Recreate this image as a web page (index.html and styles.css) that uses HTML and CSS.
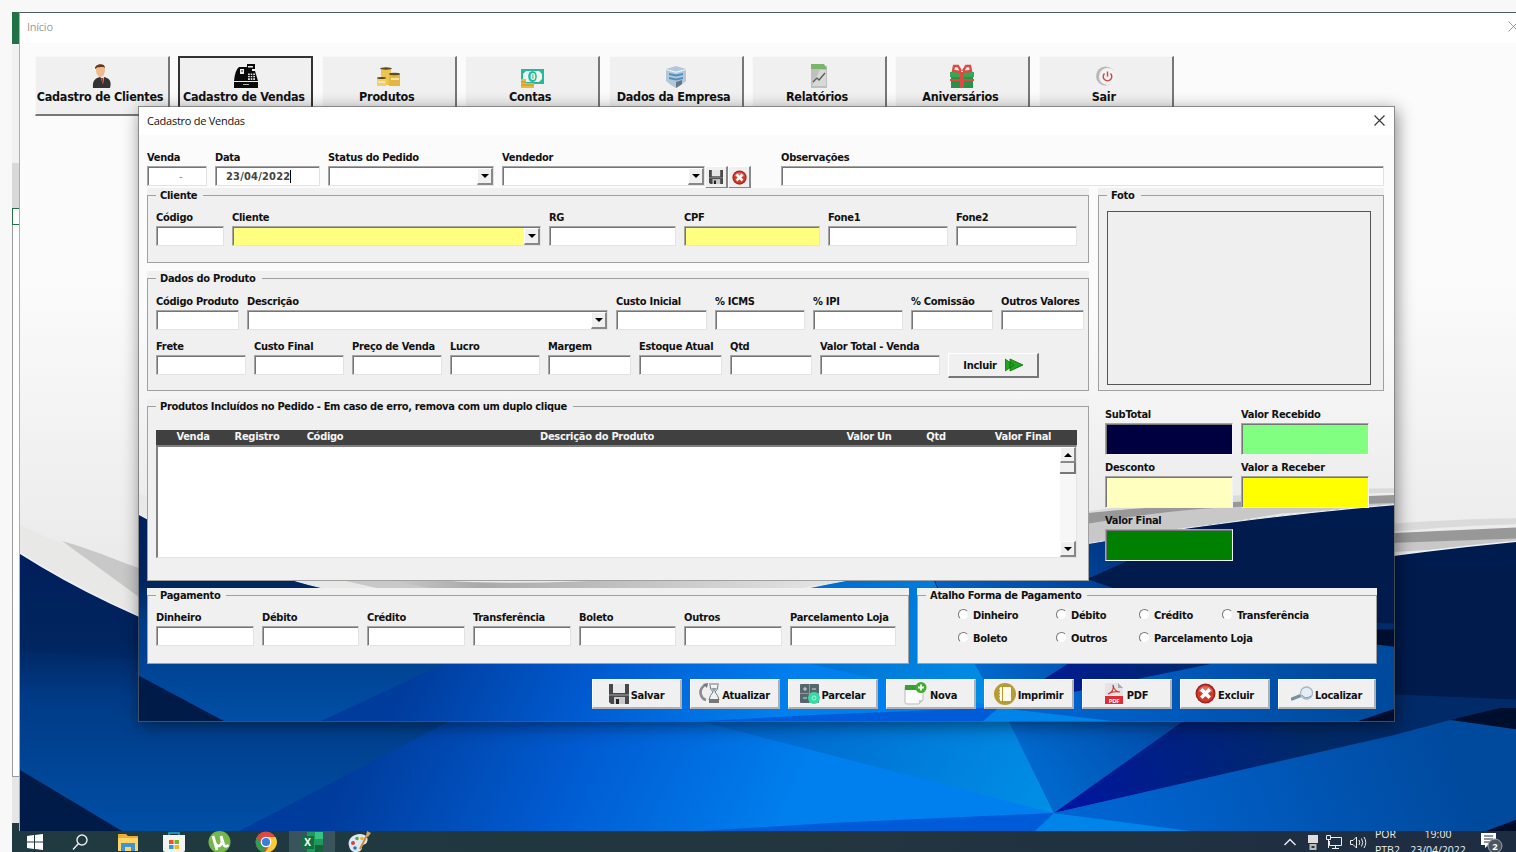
FILE: index.html
```html
<!DOCTYPE html>
<html lang="pt-BR">
<head>
  <meta charset="UTF-8">
  <title>Cadastro de Vendas</title>
  <link rel="stylesheet" href="styles.css">
</head>

<body>

  <!-- shared drawings -->
  <svg class="defs" width="0" height="0">
    <defs>
      <linearGradient id="paper" x1="0" y1="0" x2="0" y2="1">
        <stop offset="0" stop-color="#fbfbfb"/>
        <stop offset=".3" stop-color="#fbfbfb"/>
        <stop offset=".65" stop-color="#ebebeb"/>
        <stop offset="1" stop-color="#e6e6e6"/>
      </linearGradient>
      <linearGradient id="navy" gradientUnits="userSpaceOnUse" x1="0" y1="560" x2="0" y2="831">
        <stop offset="0" stop-color="#001f5c"/>
        <stop offset=".3" stop-color="#00255f"/>
        <stop offset=".5" stop-color="#003a85"/>
        <stop offset="1" stop-color="#004fa6"/>
      </linearGradient>
      <linearGradient id="mid" gradientUnits="userSpaceOnUse" x1="380" y1="700" x2="760" y2="880">
        <stop offset="0" stop-color="#003c9c"/>
        <stop offset=".5" stop-color="#005cd2"/>
        <stop offset="1" stop-color="#0080ee"/>
      </linearGradient>
      <linearGradient id="sky" gradientUnits="userSpaceOnUse" x1="760" y1="640" x2="1050" y2="813">
        <stop offset="0" stop-color="#0063cc"/>
        <stop offset="1" stop-color="#0090e6"/>
      </linearGradient>
      <linearGradient id="side" gradientUnits="userSpaceOnUse" x1="1060" y1="800" x2="1330" y2="600">
        <stop offset="0" stop-color="#0068cc"/>
        <stop offset=".45" stop-color="#0048a4"/>
        <stop offset="1" stop-color="#001b4e"/>
      </linearGradient>
      <linearGradient id="wedge" gradientUnits="userSpaceOnUse" x1="1054" y1="813" x2="1290" y2="700">
        <stop offset="0" stop-color="#0014a4"/>
        <stop offset=".35" stop-color="#001d8c"/>
        <stop offset="1" stop-color="#002a68"/>
      </linearGradient>
      <linearGradient id="low" gradientUnits="userSpaceOnUse" x1="1120" y1="831" x2="1440" y2="720">
        <stop offset="0" stop-color="#0064d0"/>
        <stop offset="1" stop-color="#004a9e"/>
      </linearGradient>
      <linearGradient id="ribbon" gradientUnits="userSpaceOnUse" x1="250" y1="0" x2="850" y2="0">
        <stop offset="0" stop-color="#dedede"/>
        <stop offset=".3" stop-color="#a9a9a9"/>
        <stop offset="1" stop-color="#e4e4e4"/>
      </linearGradient>
      <clipPath id="sea">
        <path d="M20 553C75 588 145 622 210 643C340 686 620 700 824 652C930 628 1040 610 1163 592C1260 573 1400 552 1529 540V831H20Z"/>
      </clipPath>
      <symbol id="wallpaper" viewBox="20 43 1509 788" preserveAspectRatio="none">
        <rect x="20" y="43" width="1509" height="788" fill="url(#paper)"/>
        <path d="M20 525C60 545 110 560 139 577C240 628 340 640 480 648L840 640L1163 570L1529 530V560L824 665H250L139 620L20 556Z" fill="#e8e8e6"/>
        <path d="M62 541C100 552 120 562 139 568C220 607 290 635 400 640V668C260 650 200 620 139 597Z" fill="#c8c8c8"/>
        <path d="M300 634C480 660 690 635 890 614V640C700 680 430 680 300 634Z" fill="url(#ribbon)"/>
        <path d="M1000 585C1080 560 1160 548 1240 538C1340 527 1420 519 1529 518V524C1440 526 1330 535 1240 552C1180 562 1090 573 1000 598Z" fill="#dadada"/>
        <path d="M1000 582C1080 560 1160 546 1394 533L1529 527V540L1394 550C1300 548 1200 560 1150 568L1000 596Z" fill="#989898"/>
        <path d="M1150 568C1240 550 1320 540 1390 543L1529 538V544L1394 552L1290 571L1163 592L1000 618V592Z" fill="#c8c8c8"/>
        <g clip-path="url(#sea)">
          <rect x="20" y="530" width="1509" height="301" fill="url(#navy)"/>
          <path d="M20 650L139 660L330 700L600 640H20Z" fill="#00255f" opacity=".5"/>
          <path d="M20 770L122 831H20Z" fill="#001b47"/>
          <path d="M239 831L448 722L610 640L823 600L1054 813L1035 831Z" fill="url(#mid)"/>
          <path d="M600 690L703 722L1054 813L990 680L960 600H760Z" fill="url(#sky)"/>
          <path d="M1054 813L1010 724L960 600L1200 520H1529V760Z" fill="url(#side)"/>
          <path d="M1160 640L1300 570H1529V722H1450L1240 722L1290 690Z" fill="#001b4c"/>
          <path d="M1054 813L1182 722L1290 690L1529 700V730L1450 720L1394 735Z" fill="url(#wedge)"/>
          <path d="M1450 720L1500 708H1529V732Z" fill="#000e2e"/>
          <path d="M1054 813L1394 735L1450 720L1529 731V831H1180Z" fill="url(#low)"/>
          <path d="M1054 813L830 823L700 831H1035Z" fill="#005bd8"/>
          <path d="M1054 813L1035 831H1190Z" fill="#0084ea"/>
          <path d="M1486 831L1529 815V831Z" fill="#000e2c"/>
        </g>
        <path d="M20 553C75 588 145 622 210 643C340 686 620 700 824 652C930 628 1040 610 1163 592C1260 573 1400 552 1529 540" fill="none" stroke="#eef1f8" stroke-width="1.5"/>
      </symbol>

      <symbol id="i-save" viewBox="0 0 20 20">
        <path d="M0 0H20V20H2L0 18Z" fill="#48484b"/>
        <path d="M4 0H16V9H4Z" fill="#e8e8e8"/>
        <path d="M0 10H20V12H0Z" fill="#77777a"/>
        <path d="M5 13H16V20H5Z" fill="#c9c9cb"/>
        <path d="M7 15H10V20H7Z" fill="#222"/>
      </symbol>
      <symbol id="i-delete" viewBox="0 0 20 20">
        <circle cx="10" cy="10" r="9.5" fill="#a32020"/>
        <circle cx="10" cy="10" r="8" fill="#d23a26"/>
        <path d="M3 8A7.5 7.5 0 0 1 17 8Q10 11 3 8Z" fill="#e98a7d" opacity=".6"/>
        <path d="M6 6L14 14M14 6L6 14" stroke="#fff" stroke-width="3.4"/>
      </symbol>
    </defs>
  </svg>

  <div class="desktop">

    <!-- spreadsheet left behind the form -->
    <div class="sheet">
      <div class="sheet-title"></div>
      <div class="sheet-ribbon"></div>
      <div class="sheet-bar"></div>
      <div class="sheet-cell"></div>
      <div class="sheet-grid"></div>
      <div class="sheet-tabs"></div>
    </div>

    <div class="taskbar">
      <div class="apps">
        <span class="app"><svg width="16" height="16" viewBox="0 0 16 16"><path d="M0 2L7 1V7.5H0ZM8 1L16 0V7.5H8ZM0 8.5H7V15L0 14ZM8 8.5H16V16L8 15Z" fill="#fff"/></svg></span>
        <span class="app"><svg width="16" height="16" viewBox="0 0 16 16" fill="none" stroke="#eee" stroke-width="1.4"><circle cx="10" cy="6" r="5"/><path d="M6.5 9.5L1 15.5"/></svg></span>
        <span class="app"><svg width="20" height="18" viewBox="0 0 20 18"><path d="M0 1H8L10 3H20V18H0Z" fill="#e8ad35"/><path d="M0 5H20V18H0Z" fill="#fbd568"/><path d="M3 10H17V18H13V14H7V18H3Z" fill="#3f94d1"/></svg></span>
        <span class="app"><svg width="22" height="20" viewBox="0 0 22 20"><path d="M6 4V1H16V4" fill="none" stroke="#2aa5d8" stroke-width="1.6"/><path d="M0 3H22V18Q22 20 20 20H2Q0 20 0 18Z" fill="#f4f4f4"/><path d="M6 8H10.500V12H6Z" fill="#e65327"/><path d="M11.500 8H16V12H11.500Z" fill="#7db41c"/><path d="M6 13H10.500V17H6Z" fill="#2a9be0"/><path d="M11.500 13H16V17H11.500Z" fill="#f6b51a"/></svg></span>
        <span class="app"><svg width="23" height="22" viewBox="0 0 23 22"><circle cx="11.500" cy="11" r="11" fill="#75b74b"/><path d="M5 5L9 19M7 12Q9 16 12 14.500Q15 13 13 5M13 5L15.500 13Q17 17 20.500 14" fill="none" stroke="#fff" stroke-width="2.800"/></svg></span>
        <span class="app"><svg width="22" height="22" viewBox="0 0 22 22"><circle cx="11" cy="11" r="10.500" fill="#dd4b3e"/><path d="M2 6L9 16L10 21.500A10.500 10.500 0 0 1 2 6Z" fill="#2f9e50"/><path d="M11 6H20.500A10.500 10.500 0 0 1 10 21.500L15.500 13Z" fill="#fbcd35"/><circle cx="11" cy="11" r="5.300" fill="#fff"/><circle cx="11" cy="11" r="4.100" fill="#3b7de0"/></svg></span>
        <span class="app active"><svg width="22" height="20" viewBox="0 0 22 20"><path d="M6 0H22V20H6Z" fill="#1f9a5a"/><path d="M14 0H22V7H14Z" fill="#35c481"/><path d="M14 13H22V20H14Z" fill="#16633b"/><rect y="4" width="13" height="13" fill="#107040"/><text x="6.500" y="14" text-anchor="middle" class="xl">X</text></svg></span>
        <span class="app"><svg width="24" height="22" viewBox="0 0 24 22"><path d="M2 15C0 8 6 3 13 3C19 3 22 7 20 11C19 14 15 13 15 16C15 20 12 21 9 21C5 21 3 19 2 15Z" fill="#dce8f2"/><circle cx="6" cy="12" r="2" fill="#d7442f"/><circle cx="10" cy="7.500" r="1.800" fill="#5aa844"/><circle cx="15" cy="7.500" r="1.800" fill="#f0b429"/><circle cx="8" cy="17" r="1.800" fill="#3173c4"/><path d="M13 18L20 4" stroke="#cf8838" stroke-width="2"/><path d="M19 5L20 0L24 2L21 6Z" fill="#d5a268"/></svg></span>
      </div>
      <div class="tray">
        <svg class="up" width="14" height="14" viewBox="0 0 14 14"><path d="M1.500 10L7 4.500L12.500 10" fill="none" stroke="#eee" stroke-width="1.400"/></svg>
        <svg width="10" height="15" viewBox="0 0 10 15"><path d="M0 0H10V8H0Z" fill="#ddd"/><path d="M1.500 9H8.500V15H1.500Z" fill="#bbb"/><path d="M3.500 11H6.500V13H3.500Z" fill="#333"/></svg>
        <svg width="16" height="15" viewBox="0 0 16 15" fill="none" stroke="#eee"><path d="M5 2.500H15.500V10.500H3.500V6M9.500 10.500V13.500M6 13.500H13"/><path d="M.5 .5H4.500V4.500H.5ZM2.500 4.500V13"/></svg>
        <svg width="17" height="15" viewBox="0 0 17 15" fill="none" stroke="#eee"><path d="M.5 5.500H3L6.500 2V13L3 9.500H.5ZM9 5Q10.500 7.500 9 10M11.500 3.500Q14 7.500 11.500 11.500M14 2Q17.500 7.500 14 13"/></svg>
        <div class="lang">POR<br>PTB2</div>
        <div class="clock">19:00<br>23/04/2022</div>
        <svg class="bell" width="22" height="22" viewBox="0 0 22 22"><path d="M0 1H15V13H7L4 16V13H0Z" fill="#fff"/><path d="M3 4H12M3 7H12M3 10H9" stroke="#1f2f42"/><circle cx="14" cy="14" r="7" fill="#4a5560" stroke="#9aa3aa"/><text x="14" y="17.500" text-anchor="middle" class="badge">2</text></svg>
      </div>
    </div>

    <div class="window inicio">
      <div class="titlebar">
        <span>Início</span>
        <svg width="11" height="11" viewBox="0 0 11 11"><path d="M.5 .5L10.500 10.500M10.500 .5L.5 10.500" stroke="#999"/></svg>
      </div>
      <div class="client">
        <svg class="wall"><use href="#wallpaper" width="100%" height="100%"/></svg>
        <div class="menu">
          <button class="menu-btn">
            <svg width="20" height="24" viewBox="0 0 20 24"><path d="M1 24C0 16 4 14 8 13H12C17 14 20 17 18 24Z" fill="#333"/><path d="M8 12H12L11 20Z" fill="#eee"/><path d="M9 14H11L11 20Z" fill="#8e2a20"/><path d="M4 5C4 0 13 -1 13 5C13 10 11 13 8 13C5 12 4 9 4 5Z" fill="#edbb8c"/><path d="M3 5C2 0 13 -2 13 4C11 2 8 4 6 3Z" fill="#6b3418"/></svg>
            <span>Cadastro de Clientes</span>
          </button>
          <button class="menu-btn focused">
            <svg width="24" height="24" viewBox="0 0 24 24"><path d="M5 3H13V0H21V5H18V7H21L24 17H0Q1 6 5 3Z" fill="#0a0a0a"/><path d="M0 18H24V24H0Z" fill="#0a0a0a"/><path d="M6 5H10V10H6ZM14 2H19V3.500H14Z" fill="#eee"/><path d="M14 9.500H21V16H14Z" fill="#ddd"/><path d="M14 11.500H21M14 13.700H21M16.300 9V16M18.700 9V16M7 7H9" stroke="#0a0a0a" stroke-width=".9"/><path d="M9 20.500H15" stroke="#ddd" stroke-width=".8"/></svg>
            <span>Cadastro de Vendas</span>
          </button>
          <button class="menu-btn">
            <svg width="23" height="22" viewBox="0 0 23 22"><path d="M4 2H14V19H4Z" fill="#ecc452"/><path d="M12 8H23V20H12Z" fill="#e5b63f"/><path d="M0 12H9V20H0Z" fill="#f1cf6b"/><ellipse cx="9" cy="2.500" rx="6" ry="1.200" fill="#5c4a20"/><ellipse cx="17.500" cy="8" rx="5.500" ry="1.200" fill="#5c4a20"/><ellipse cx="4.500" cy="12" rx="4.500" ry="1" fill="#5c4a20"/><path d="M14 13H22M1 16H8" stroke="#fae29b" stroke-width="2"/></svg>
            <span>Produtos</span>
          </button>
          <button class="menu-btn">
            <svg width="24" height="20" viewBox="0 0 24 20"><path d="M1 1H24V16H1Z" fill="#25b99a"/><path d="M6 3H19L22 6V11L19 14H6L3 11V6Z" fill="#f2f2ee"/><ellipse cx="12.500" cy="8.500" rx="4.300" ry="5.500" fill="#25b99a"/><text x="12.500" y="12" text-anchor="middle" class="coin">0</text><path d="M1 11H6V20H1ZM6 15H14V20H6Z" fill="#e7b93e"/><path d="M1 14H6M1 17H14" stroke="#bb8c20" stroke-width=".8"/></svg>
            <span>Contas</span>
          </button>
          <button class="menu-btn">
            <svg width="22" height="22" viewBox="0 0 22 22"><path d="M1 3L11 0L21 3V15Q17 19 11 22Q5 19 1 15Z" fill="#b2c7d8"/><path d="M1 3L11 5.500L21 3V4L11 7L1 4Z" fill="#e8f1f7"/><path d="M4 7L11 8.500L18 7V9L11 10.500L4 9ZM4 11L11 12.500L18 11V13L11 14.500L4 13Z" fill="#4f8fc0"/><path d="M11 16V22L17 18V14Z" fill="#677784"/></svg>
            <span>Dados da Empresa</span>
          </button>
          <button class="menu-btn">
            <svg width="18" height="24" viewBox="0 0 18 24"><path d="M1 2H17V24H1Z" fill="#bfc1be"/><path d="M1 0H14L17 5H1Z" fill="#7ab56c"/><path d="M2 22L10 6H16V22Z" fill="#d7d9d6"/><path d="M3 18L7 14L9 16L15 9" fill="none" stroke="#555" stroke-width="1.200"/></svg>
            <span>Relatórios</span>
          </button>
          <button class="menu-btn">
            <svg width="24" height="24" viewBox="0 0 24 24"><path d="M0 8H24V13H0Z" fill="#35a854"/><path d="M1 13H23V24H1Z" fill="#2a9248"/><path d="M10 8H14V24H10ZM0 15H24V17H0Z" fill="#dc4b43"/><path d="M11 8L3 7L4 2L8 2L11 7M13 8L21 7L20 2L16 2L13 7" fill="none" stroke="#dc4b43" stroke-width="2.400"/></svg>
            <span>Aniversários</span>
          </button>
          <button class="menu-btn">
            <svg width="20" height="22" viewBox="0 0 20 22"><circle cx="9.500" cy="10" r="9.500" fill="#b9b9b9"/><circle cx="11.500" cy="10.500" r="8.500" fill="#f3f1f1"/><path d="M8.500 7.500A4.300 4.300 0 1 0 14.500 7.500M11.500 5.500V10.500" fill="none" stroke="#cf4840" stroke-width="1.400"/></svg>
            <span>Sair</span>
          </button>
        </div>
      </div>
    </div>

    <div class="window vendas">
      <div class="titlebar">
        <span>Cadastro de Vendas</span>
        <svg width="11" height="11" viewBox="0 0 11 11"><path d="M.5 .5L10.500 10.500M10.500 .5L.5 10.500" stroke="#333" stroke-width="1.100"/></svg>
      </div>
      <div class="client">
        <svg class="wall"><use href="#wallpaper" width="100%" height="100%"/></svg>

        <div class="content">
          <div class="row row-pedido">
            <div class="field"><label>Venda</label><div class="box dash">-</div></div>
            <div class="field"><label>Data</label><div class="box date">23/04/2022<i class="caret"></i></div></div>
            <div class="field"><label>Status do Pedido</label><div class="box combo"><b class="arrow"></b></div></div>
            <div class="vendedor">
              <div class="field"><label>Vendedor</label><div class="box combo"><b class="arrow"></b></div></div>
              <button class="mini"><svg width="14" height="14"><use href="#i-save"/></svg></button>
              <button class="mini"><svg width="15" height="15"><use href="#i-delete"/></svg></button>
            </div>
            <div class="field"><label>Observações</label><div class="box"></div></div>
          </div>

          <div class="columns">
            <div class="left">
              <div class="frame frame-cliente">
                <fieldset>
                  <legend>Cliente</legend>
                  <div class="row row-cliente">
                    <div class="field"><label>Código</label><div class="box"></div></div>
                    <div class="field"><label>Cliente</label><div class="box combo yellow"><b class="arrow"></b></div></div>
                    <div class="field"><label>RG</label><div class="box"></div></div>
                    <div class="field"><label>CPF</label><div class="box yellow"></div></div>
                    <div class="field"><label>Fone1</label><div class="box"></div></div>
                    <div class="field"><label>Fone2</label><div class="box"></div></div>
                  </div>
                </fieldset>
              </div>

              <div class="frame frame-produto">
                <fieldset>
                  <legend>Dados do Produto</legend>
                  <div class="row row-produto">
                    <div class="field"><label>Código Produto</label><div class="box"></div></div>
                    <div class="field"><label>Descrição</label><div class="box combo"><b class="arrow"></b></div></div>
                    <div class="field"><label>Custo Inicial</label><div class="box"></div></div>
                    <div class="field"><label>% ICMS</label><div class="box"></div></div>
                    <div class="field"><label>% IPI</label><div class="box"></div></div>
                    <div class="field"><label>% Comissão</label><div class="box"></div></div>
                    <div class="field"><label>Outros Valores</label><div class="box"></div></div>
                  </div>
                  <div class="row row-valores">
                    <div class="field"><label>Frete</label><div class="box"></div></div>
                    <div class="field"><label>Custo Final</label><div class="box"></div></div>
                    <div class="field"><label>Preço de Venda</label><div class="box"></div></div>
                    <div class="field"><label>Lucro</label><div class="box"></div></div>
                    <div class="field"><label>Margem</label><div class="box"></div></div>
                    <div class="field"><label>Estoque Atual</label><div class="box"></div></div>
                    <div class="field"><label>Qtd</label><div class="box"></div></div>
                    <div class="field"><label>Valor Total - Venda</label><div class="box"></div></div>
                    <button class="incluir">Incluir <svg width="18" height="14" viewBox="0 0 18 14"><path d="M0 1L9 7L0 13ZM5 1L18 7L5 13Z" fill="#1fa51f" stroke="#0b6b0b" stroke-width=".8"/></svg></button>
                  </div>
                </fieldset>
              </div>

              <div class="frame frame-lista">
                <fieldset>
                  <legend>Produtos Incluídos no Pedido - Em caso de erro, remova com um duplo clique</legend>
                  <div class="list-head">
                    <span>Venda</span><span>Registro</span><span>Código</span><span>Descrição do Produto</span><span>Valor Un</span><span>Qtd</span><span>Valor Final</span>
                  </div>
                  <div class="list">
                    <div class="scroll">
                      <b class="arrow up"></b>
                      <b class="thumb"></b>
                      <b class="arrow down"></b>
                    </div>
                  </div>
                </fieldset>
              </div>
            </div>

            <div class="right">
              <div class="frame frame-foto">
                <fieldset>
                  <legend>Foto</legend>
                  <div class="foto"></div>
                </fieldset>
              </div>
              <div class="totals">
                <div class="field"><label>SubTotal</label><div class="box subtotal"></div></div>
                <div class="field"><label>Valor Recebido</label><div class="box recebido"></div></div>
                <div class="field"><label>Desconto</label><div class="box desconto"></div></div>
                <div class="field"><label>Valor a Receber</label><div class="box receber"></div></div>
                <div class="field"><label>Valor Final</label><div class="box final"></div></div>
              </div>
            </div>
          </div>

          <div class="bottom">
            <div class="frame frame-pagamento">
              <fieldset>
                <legend>Pagamento</legend>
                <div class="row row-pagamento">
                  <div class="field"><label>Dinheiro</label><div class="box"></div></div>
                  <div class="field"><label>Débito</label><div class="box"></div></div>
                  <div class="field"><label>Crédito</label><div class="box"></div></div>
                  <div class="field"><label>Transferência</label><div class="box"></div></div>
                  <div class="field"><label>Boleto</label><div class="box"></div></div>
                  <div class="field"><label>Outros</label><div class="box"></div></div>
                  <div class="field"><label>Parcelamento Loja</label><div class="box"></div></div>
                </div>
              </fieldset>
            </div>
            <div class="frame frame-atalho">
              <fieldset>
                <legend>Atalho Forma de Pagamento</legend>
                <div class="radios">
                  <span><i></i>Dinheiro</span>
                  <span><i></i>Débito</span>
                  <span><i></i>Crédito</span>
                  <span><i></i>Transferência</span>
                  <span><i></i>Boleto</span>
                  <span><i></i>Outros</span>
                  <span><i></i>Parcelamento Loja</span>
                </div>
              </fieldset>
            </div>
          </div>

          <div class="actions">
            <button><svg width="20" height="20"><use href="#i-save"/></svg><span>Salvar</span></button>
            <button><svg width="21" height="21" viewBox="0 0 21 21"><path d="M6 2Q0 6 2 12Q3 16 7 17" fill="none" stroke="#8a8a8a" stroke-width="2.600"/><path d="M4 1L9 0L8 5Z" fill="#777"/><path d="M10 1H20M11 2Q11 7 14 9Q11 12 10 17H20Q19 12 16 9Q19 7 19 2" fill="#eef3f6" stroke="#777"/><path d="M10 16H20V20H10Z" fill="#777"/><path d="M12 5H18L15 9Z" fill="#8fa2b0"/></svg><span>Atualizar</span></button>
            <button><svg width="20" height="20" viewBox="0 0 20 20"><rect width="19" height="19" rx="1" fill="#56666f"/><path d="M9.500 0V19M0 9.500H19" stroke="#8b989f"/><path d="M3 5H7M5 3V7M12 5H16M3 14H7" stroke="#cfd8dc"/><circle cx="14" cy="14" r="6" fill="#35dca4"/><circle cx="14" cy="14" r="2" fill="none" stroke="#a8f3dc"/></svg><span>Parcelar</span></button>
            <button><svg width="24" height="23" viewBox="0 0 24 23"><path d="M1 5H19V18L15 22H3Q1 22 1 20Z" fill="#fcfcfc" stroke="#bbb"/><path d="M1 3H19V8H1Z" fill="#3a9d35"/><path d="M19 18H15V22Z" fill="#ccc"/><circle cx="17" cy="5.500" r="5.500" fill="#3eae2e"/><path d="M14 5.500H20M17 2.500V8.500" stroke="#fff" stroke-width="1.800"/></svg><span>Nova</span></button>
            <button><svg width="22" height="22" viewBox="0 0 22 22"><circle cx="11" cy="11" r="11" fill="#b79b35"/><rect x="6" y="4" width="11" height="14" rx="1" fill="#fffbea"/><path d="M8.500 4V18" stroke="#b79b35"/><path d="M5 6H8M5 9H8M5 12H8M5 15H8" stroke="#fff"/></svg><span>Imprimir</span></button>
            <button class="pdf"><svg width="18" height="21" viewBox="0 0 18 21"><path d="M0 0H13L18 5V21H0Z" fill="#e4e4e4"/><path d="M13 0V5H18Z" fill="#aaa"/><path d="M3 11C8 9 9 6 8 2C9 7 11 9 15 9C10 8 6 9 3 11Z" fill="none" stroke="#cf3a35" stroke-width="1.200"/><path d="M0 13H18V21H0Z" fill="#db2f35"/><text x="9" y="19.500" text-anchor="middle" class="pdf-tag">PDF</text></svg><span>PDF</span></button>
            <button><svg width="21" height="21"><use href="#i-delete"/></svg><span>Excluir</span></button>
            <button class="wide"><svg width="22" height="16" viewBox="0 0 22 16"><path d="M1 13L11 9" stroke="#7390a2" stroke-width="3" stroke-linecap="round"/><circle cx="15.500" cy="7" r="6" fill="#e3edf5" stroke="#a9b7c2" stroke-width="1.300"/><path d="M11 9Q14 14 20 10" fill="none" stroke="#6d9fc8"/></svg><span>Localizar</span></button>
          </div>
        </div>
      </div>
    </div>

  </div>

</body>
</html>
```

FILE: styles.css
```css
* {
  box-sizing: border-box;
}

body {
  margin: 0;
  background: #f8f8f8;
  font-family: "DejaVu Sans Condensed", "Noto Sans", sans-serif;
  font-size: 11px;
  color: #111;
}

.defs {
  position: absolute;
}

.desktop {
  position: relative;
  width: 1516px;
  height: 852px;
  overflow: hidden;
}

button {
  font: inherit;
  font-weight: bold;
  letter-spacing: inherit;
  color: #111;
  padding: 0;
  margin: 0;
  border-radius: 0;
}

/* spreadsheet strip */
.sheet {
  position: absolute;
  left: 12px;
  top: 12px;
  width: 20px;
  height: 811px;
  display: flex;
  flex-direction: column;
  background: #fff;
}

.sheet-title {
  height: 32px;
  background: #217346;
}

.sheet-ribbon {
  height: 119px;
  background: #f1f1f1;
}

.sheet-bar {
  height: 45px;
  background: #d9d9d9;
}

.sheet-cell {
  height: 17px;
  border: 1px solid #217346;
}

.sheet-grid {
  height: 552px;
  border: 1px solid #999;
  border-top: none;
}

.sheet-tabs {
  flex: 1;
  background: #e6e6e6;
}

/* taskbar */
.taskbar {
  position: absolute;
  left: 12px;
  top: 823px;
  width: 1504px;
  height: 38px;
  display: flex;
  justify-content: space-between;
  background: linear-gradient(to right, #1f3a40, #22363f 50%, #1e2c42);
}

.apps {
  display: flex;
  height: 38px;
}

.app {
  width: 46.200px;
  display: flex;
  align-items: center;
  justify-content: center;
}

.app:nth-child(3) {
  padding-left: 2px;
  width: 47.500px;
}

.app:first-child {
  width: 45px;
}

.app.active {
  background: #39545a;
}

.xl {
  font: bold 10px "Open Sans", sans-serif;
  fill: #fff;
}

.tray {
  display: flex;
  align-items: center;
  height: 38px;
  padding-right: 13px;
  color: #eee;
  font-family: "Open Sans", sans-serif;
  line-height: 16px;
}

.tray svg {
  margin-right: 8px;
}

.tray .up {
  margin-right: 11px;
}

.lang {
  width: 27px;
  margin-right: 7px;
  font-size: 10.500px;
}

.clock {
  width: 58px;
  margin-right: 14px;
  text-align: center;
  font-size: 10.500px;
}

.tray .bell {
  margin: 2px 0 0;
}

.badge {
  font: bold 9.500px "Open Sans", sans-serif;
  fill: #fff;
}

/* windows */
.window {
  position: absolute;
  display: flex;
  flex-direction: column;
}

.inicio {
  left: 19px;
  top: 12px;
  width: 1510px;
  height: 819px;
  border-top: 1px solid #4a5c62;
  border-left: 1px solid #a8b0b4;
}

.vendas {
  left: 138px;
  top: 106px;
  width: 1257px;
  height: 616px;
  border: 1px solid rgba(90, 90, 90, 0.7);
  box-shadow: 2px 4px 16px rgba(0, 0, 0, 0.45);
}

.titlebar {
  display: flex;
  align-items: center;
  justify-content: space-between;
  height: 30px;
  padding: 0 9px 1px 8px;
  background: #fff;
  font-family: "Open Sans", sans-serif;
  font-size: 11px;
  letter-spacing: -0.250px;
}

.vendas .titlebar {
  height: 28px;
}

.inicio .titlebar {
  padding: 0 10px 3px 7px;
  color: #999;
}

.client {
  position: relative;
  flex: 1;
}

.wall {
  position: absolute;
  left: 0;
  top: 0;
  width: 100%;
  height: 100%;
}

/* main menu */
.menu {
  position: relative;
  display: flex;
  gap: 8.400px;
  padding: 13px 0 0 15px;
}

.menu-btn {
  width: 135px;
  height: 60px;
  display: flex;
  flex-direction: column;
  align-items: center;
  justify-content: flex-end;
  padding-bottom: 9px;
  background: #f0f0f0;
  border: 1px solid #f8f8f8;
  border-right: 2px solid #777;
  border-bottom: 2px solid #777;
  font-size: 12.500px;
  letter-spacing: -0.250px;
  line-height: 17px;
  white-space: nowrap;
}

.menu-btn.focused {
  border: 2px solid #333;
}

.menu-btn svg {
  margin-bottom: 0;
}

.menu-btn span {
  margin: 0 4px 0 0;
}

.coin {
  font: bold 10px "Liberation Serif", serif;
  fill: #fff;
}

/* form */
.content {
  position: relative;
  padding: 15px 0 0 8px;
  font-weight: bold;
  letter-spacing: -0.280px;
}

.row {
  display: grid;
  column-gap: 8px;
}

.row-pedido {
  grid-template-columns: 60px 105px 166px 271px 603px;
}

.field label {
  display: block;
  height: 16px;
  line-height: 16px;
  white-space: nowrap;
}

.box {
  height: 20px;
  background: #fff;
  border: 1px solid #e3e3e3;
  border-top-color: #a5a5a5;
  border-left-color: #a5a5a5;
  box-shadow: inset 1px 1px #757575;
}

.yellow {
  background: #ffff80;
}

.dash {
  padding-left: 31px;
  font-weight: normal;
  color: #888;
  line-height: 19px;
}

.date {
  display: flex;
  align-items: center;
  padding: 1px 0 0 10px;
  color: #444;
  letter-spacing: 0.200px;
}

.caret {
  width: 1px;
  height: 13px;
  background: #000;
}

.combo {
  display: flex;
  justify-content: flex-end;
  padding-top: 1px;
}

.arrow {
  display: flex;
  align-items: center;
  justify-content: center;
  width: 16px;
  height: 17px;
  background: #f0f0f0;
  border: 1px solid #fff;
  border-right: 2px solid #888;
  border-bottom: 2px solid #888;
}

.arrow::after {
  content: "";
  border: 4px solid transparent;
  border-top-color: #000;
  border-bottom: none;
}

.arrow.up::after {
  border: 4px solid transparent;
  border-bottom-color: #000;
  border-top: none;
}

.vendedor {
  display: flex;
  align-items: flex-end;
}

.vendedor .field {
  width: 203px;
  align-self: flex-start;
}

.mini {
  width: 23px;
  height: 23px;
  display: flex;
  align-items: center;
  justify-content: center;
  margin-bottom: -3px;
  background: #f0f0f0;
  border: 1px solid #fff;
  border-right: 2px solid #888;
  border-bottom: 2px solid #888;
}

.columns {
  display: flex;
  gap: 9px;
  margin-top: 2px;
}

.left {
  width: 942px;
  display: flex;
  flex-direction: column;
}

.right {
  width: 286px;
}

.frame {
  background: #f0f0f0;
}

fieldset {
  height: 100%;
  margin: 0;
  padding: 0 0 0 8px;
  min-width: 0;
  border: 1px solid #a0a0a0;
}

legend {
  height: 14px;
  line-height: 16px;
  padding: 0 6px 0 4px;
}

.frame-cliente {
  height: 75px;
  margin-bottom: 8px;
}

.frame-cliente .row {
  margin-top: 8px;
  grid-template-columns: 68px 309px 127px 136px 120px 121px;
}

.frame-produto {
  height: 120px;
  margin-bottom: 8px;
}

.row-produto {
  margin-top: 9px;
  grid-template-columns: 83px 361px 91px 90px 90px 82px 83px;
}

.row-valores {
  margin-top: 9px;
  grid-template-columns: 90px 90px 90px 90px 83px 83px 82px 120px 91px;
}

.incluir {
  display: flex;
  align-items: center;
  justify-content: center;
  gap: 8px;
  height: 25px;
  margin-top: 14px;
  background: #f0f0f0;
  border: 1px solid #fff;
  border-right: 2px solid #777;
  border-bottom: 2px solid #777;
}

.frame-lista {
  height: 182px;
}

.frame-lista legend {
  letter-spacing: -0.340px;
}

.list-head {
  display: grid;
  grid-template-columns: 74px 54px 82px 462px 82px 52px 115px;
  width: 921px;
  height: 15px;
  margin-top: 17px;
  background: #404040;
  color: #f4f4f4;
  line-height: 14px;
  text-align: center;
}

.list-head span:last-child {
  padding-left: 7px;
}

.list {
  display: flex;
  justify-content: flex-end;
  width: 921px;
  height: 113px;
  background: #fff;
  border: 1px solid #e3e3e3;
  border-top: 2px solid #808080;
  border-left: 2px solid #808080;
}

.scroll {
  display: flex;
  flex-direction: column;
  width: 16px;
  background: #f7f7f7;
}

.scroll .arrow {
  height: 16px;
}

.thumb {
  height: 11px;
  margin-bottom: auto;
  background: #f0f0f0;
  border-right: 2px solid #777;
  border-bottom: 2px solid #777;
}

.frame-foto {
  height: 203px;
}

.foto {
  width: 264px;
  height: 174px;
  margin-top: 9px;
  background: #efefef;
  border: 1px solid #555;
}

.totals {
  display: grid;
  grid-template-columns: 128px 128px;
  column-gap: 8px;
  row-gap: 5px;
  padding: 16px 0 0 7px;
}

.totals .box {
  height: 32px;
  border-right-color: #f4f4f4;
  border-bottom-color: #f4f4f4;
}

.subtotal {
  background: #000040;
}

.recebido {
  background: #80ff80;
}

.desconto {
  background: #ffffc0;
}

.receber {
  background: #ffff00;
}

.final {
  background: #008000;
}

.bottom {
  display: flex;
  gap: 8px;
  margin-top: 7px;
}

.frame-pagamento {
  width: 762px;
  height: 76px;
}

.row-pagamento {
  margin-top: 8px;
  grid-template-columns: 98px 97px 98px 98px 97px 98px 106px;
}

.frame-atalho {
  width: 460px;
}

.radios {
  display: grid;
  grid-template-columns: 98px 83px 83px 150px;
  row-gap: 8px;
  padding: 6px 0 0 32px;
}

.radios span {
  display: flex;
  align-items: center;
  height: 15px;
  white-space: nowrap;
}

.radios i {
  flex: none;
  width: 11px;
  height: 11px;
  margin: -3px 4px 0 0;
  border-radius: 50%;
  background: #fff;
  border: 1px solid #eee;
  border-top-color: #777;
  border-left-color: #777;
}

.actions {
  display: flex;
  gap: 8px;
  padding: 15px 0 0 445px;
}

.actions button {
  display: flex;
  align-items: center;
  justify-content: center;
  width: 90px;
  height: 30px;
  background: #f0f0f0;
  border: 1px solid #fff;
  border-right: 2px solid #b0b0b0;
  border-bottom: 2px solid #b0b0b0;
}

.actions .wide {
  width: 98px;
}

.actions span {
  padding: 4px 0 0 2px;
}

.actions .pdf span {
  padding-left: 4px;
}

.pdf-tag {
  font: bold 6px "Open Sans", sans-serif;
  fill: #fff;
}
```
